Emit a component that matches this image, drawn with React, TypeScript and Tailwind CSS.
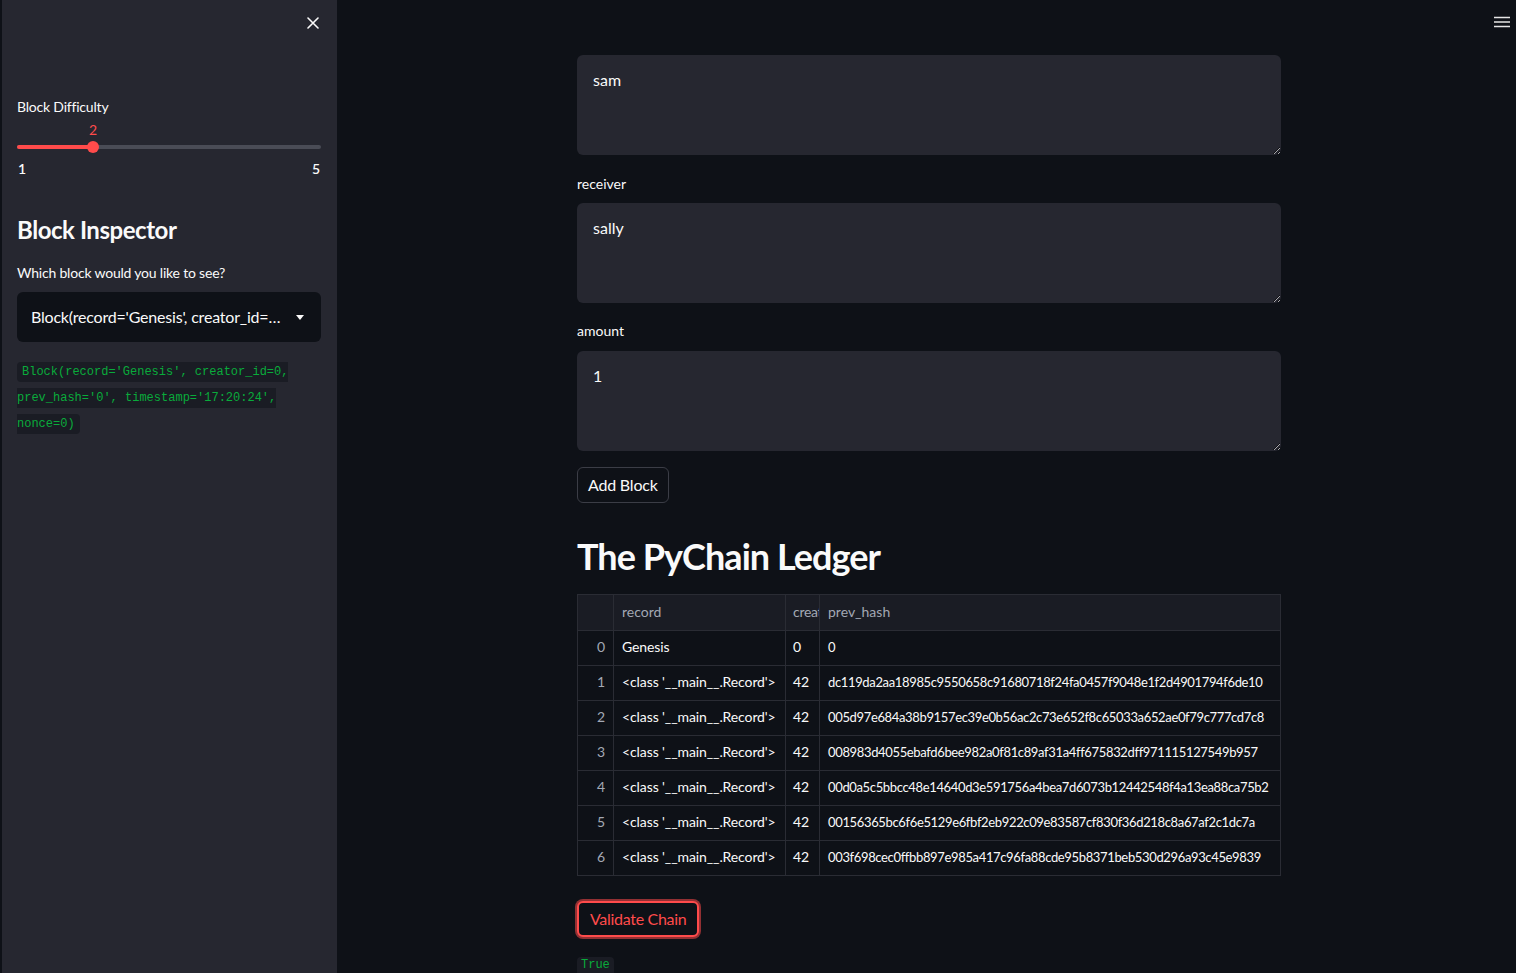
import React from 'react';

const ROWS = [
  { i: 0, record: 'Genesis', creator: '0', hash: '0' },
  { i: 1, record: "<class '__main__.Record'>", creator: '42', hash: 'dc119da2aa18985c9550658c91680718f24fa0457f9048e1f2d4901794f6de10' },
  { i: 2, record: "<class '__main__.Record'>", creator: '42', hash: '005d97e684a38b9157ec39e0b56ac2c73e652f8c65033a652ae0f79c777cd7c8' },
  { i: 3, record: "<class '__main__.Record'>", creator: '42', hash: '008983d4055ebafd6bee982a0f81c89af31a4ff675832dff971115127549b957' },
  { i: 4, record: "<class '__main__.Record'>", creator: '42', hash: '00d0a5c5bbcc48e14640d3e591756a4bea7d6073b12442548f4a13ea88ca75b2' },
  { i: 5, record: "<class '__main__.Record'>", creator: '42', hash: '00156365bc6f6e5129e6fbf2eb922c09e83587cf830f36d218c8a67af2c1dc7a' },
  { i: 6, record: "<class '__main__.Record'>", creator: '42', hash: '003f698cec0ffbb897e985a417c96fa88cde95b8371beb530d296a93c45e9839' },
];

const FIELDS = [
  { label: null, value: 'sam', wrap: '', gap: '' },
  { label: 'receiver', value: 'sally', wrap: 'mt-[19px]', gap: 'mb-[9px]' },
  { label: 'amount', value: '1', wrap: 'mt-[18px]', gap: 'mb-[10px]' },
];

const Sidebar: React.FC = () => (
  <aside className="w-[337px] shrink-0 h-full bg-[#262730] border-l-2 border-[#0e1117] pl-[15px] pr-[16px] pt-[17px]">
    <div className="flex justify-end pr-[2px]">
      <svg width="12" height="12" viewBox="0 0 12 12" className="text-[#fafafa]">
        <path d="M1 1L11 11M11 1L1 11" stroke="currentColor" strokeWidth="1.6" strokeLinecap="round" />
      </svg>
    </div>

    <div className="mt-[68px] text-[14px] leading-[20px] text-[#fafafa] tracking-[-0.2px]">Block Difficulty</div>

    {/* slider */}
    <div className="relative h-[16px] mt-[5px]">
      <span className="absolute left-[25%] -translate-x-1/2 text-[14px] leading-[16px] text-[#ff4b4b]">2</span>
    </div>
    <div className="relative h-[12px] mt-[3px]">
      <div className="absolute left-0 right-0 top-[4px] h-[4px] rounded-full bg-[#4a4c56]" />
      <div className="absolute left-0 w-[25%] top-[4px] h-[4px] rounded-full bg-[#ff4b4b]" />
      <div className="absolute left-[25%] top-0 w-[12px] h-[12px] -translate-x-1/2 rounded-full bg-[#ff4b4b]" />
    </div>
    <div className="flex justify-between mt-[6px] text-[14px] leading-[20px] text-[#fafafa] font-semibold px-[1px]">
      <span>1</span>
      <span>5</span>
    </div>

    <h2 className="mt-[35px] text-[24px] leading-[32px] font-bold text-[#fafafa] tracking-[-0.45px]">Block Inspector</h2>
    <div className="mt-[17px] text-[14px] leading-[20px] text-[#fafafa] tracking-[-0.2px]">Which block would you like to see?</div>

    <div className="mt-[9px] h-[50px] rounded-md bg-[#0e1117] flex items-center pl-[14px] pr-[17px] gap-[12px]">
      <span className="flex-1 truncate text-[16px] text-[#fafafa] tracking-[-0.2px]">
        Block(record='Genesis', creator_id=0, prev_hash='0', timestamp='17:20:24', nonce=0)
      </span>
      <svg width="8" height="5" viewBox="0 0 8 5" className="shrink-0">
        <path d="M0 0H8L4 5Z" fill="#fafafa" />
      </svg>
    </div>

    <div className="mt-[17px] leading-[26px] font-['Liberation_Mono',monospace] text-[12px]">
      <code className="bg-[#1a1c24] text-[#09ab3b] px-[5px] py-[3px] rounded">
        Block(record='Genesis', creator_id=0, prev_hash='0', timestamp='17:20:24', nonce=0)
      </code>
    </div>
  </aside>
);

const App: React.FC = () => {
  return (
    <div className="relative flex h-[973px] w-full overflow-hidden bg-[#0e1117] font-['Lato','Source_Sans_Pro',sans-serif] text-[#fafafa]">
      <Sidebar />

      <main className="flex-1 h-full pl-[240px] pt-[55px]">
        <div className="w-[704px]">
          {FIELDS.map((f, idx) => (
            <div key={idx} className={f.wrap}>
              {f.label && (
                <div className={`text-[14px] leading-[20px] ${f.gap}`}>{f.label}</div>
              )}
              <textarea
                readOnly
                value={f.value}
                className="block w-full h-[100px] rounded-md bg-[#262730] text-[#fafafa] text-[16px] leading-[22px] pl-[16px] pt-[14px] outline-none"
              />
            </div>
          ))}

          <button className="mt-[16px] h-[36px] px-[10px] rounded-md border border-[#3b3d46] text-[16px] text-[#fafafa] bg-[#0e1117] tracking-[-0.2px]">
            Add Block
          </button>

          <h1 className="mt-[31px] text-[36px] leading-[44px] font-bold tracking-[-0.95px]">The PyChain Ledger</h1>

          <table className="mt-[16px] w-full table-fixed border-collapse text-[14px]">
            <colgroup>
              <col className="w-[36px]" />
              <col className="w-[172px]" />
              <col className="w-[34px]" />
              <col />
            </colgroup>
            <thead>
              <tr className="h-[36px] bg-[#1a1c24] text-[#a3a8b4]">
                <th className="border border-[#2a2c34]" />
                <th className="border border-[#2a2c34] text-left font-normal px-[8px] pb-[2px]">record</th>
                <th className="border border-[#2a2c34] text-left font-normal pl-[7px] pb-[2px] overflow-hidden whitespace-nowrap tracking-[-0.3px]">creator_id</th>
                <th className="border border-[#2a2c34] text-left font-normal px-[8px] pb-[2px]">prev_hash</th>
              </tr>
            </thead>
            <tbody>
              {ROWS.map((r) => (
                <tr key={r.i} className="h-[35px]">
                  <td className="border border-[#2a2c34] text-right pr-[8px] pb-[3px] text-[#a3a8b4]">{r.i}</td>
                  <td className="border border-[#2a2c34] px-[8px] pb-[3px] whitespace-nowrap overflow-hidden tracking-[-0.1px]">{r.record}</td>
                  <td className="border border-[#2a2c34] pl-[7px] pb-[3px] whitespace-nowrap overflow-hidden">{r.creator}</td>
                  <td className="border border-[#2a2c34] pl-[8px] whitespace-nowrap overflow-hidden text-[13px] tracking-[-0.35px]">{r.hash}</td>
                </tr>
              ))}
            </tbody>
          </table>

          <button className="mt-[25px] h-[36px] px-[11px] rounded-md border-2 border-[#ff4b4b] shadow-[0_0_0_2px_rgba(255,75,75,0.55)] text-[16px] text-[#ff4b4b] bg-[#0e1117] tracking-[-0.3px]">
            Validate Chain
          </button>

          <code className="mt-[20px] block w-fit bg-[#1a1c24] text-[#09ab3b] font-['Liberation_Mono',monospace] text-[12px] leading-[16px] px-[4px] pt-0 pb-[8px] rounded">
            True
          </code>
        </div>
      </main>

      <svg width="16" height="12" viewBox="0 0 16 12" className="absolute top-[16px] right-[6px]">
        <path d="M0 1.5H16M0 6H16M0 10.5H16" stroke="#e6e6e6" strokeWidth="1.6" />
      </svg>
    </div>
  );
};

export default App;
